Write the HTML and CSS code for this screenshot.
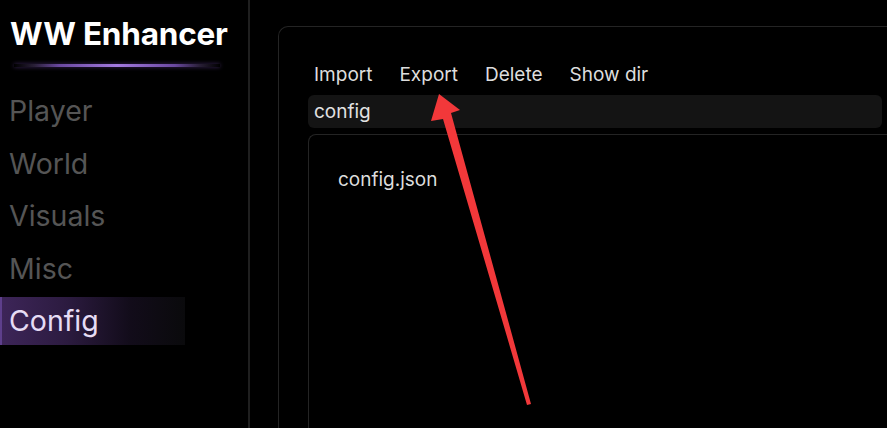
FILE: index.html
```html
<!DOCTYPE html>
<html lang="en">
<head>
    <meta charset="UTF-8">
    <meta name="viewport" content="width=device-width, initial-scale=1.0">
    <title>WW Enhancer</title>
    <link rel="stylesheet" href="styles.css">
</head>
<body>
    <aside class="sidebar">
        <h1 class="title">WW Enhancer</h1>
        <div class="glow-line"></div>
        <nav class="nav">
            <a class="nav-item">Player</a>
            <a class="nav-item">World</a>
            <a class="nav-item">Visuals</a>
            <a class="nav-item">Misc</a>
            <a class="nav-item active">Config</a>
        </nav>
    </aside>
    <main class="content">
        <section class="panel">
            <div class="actions">
                <button class="action">Import</button>
                <button class="action">Export</button>
                <button class="action">Delete</button>
                <button class="action">Show dir</button>
            </div>
            <input class="name-input" type="text" value="config">
            <div class="file-list">
                <div class="file-item">config.json</div>
            </div>
        </section>
    </main>
    <!-- pointer drawn over the toolbar -->
    <svg class="pointer" width="887" height="428" viewBox="0 0 887 428">
        <polygon points="439,94 460,110 451,113 531,404 527,405 443,119 431,121" fill="#f2383a"/>
    </svg>
</body>
</html>
```

FILE: styles.css
```css
html, body {
    margin: 0;
    height: 100%;
}
body {
    display: flex;
    background-color: #000;
    color: #ddd;
    font-family: Inter, "Noto Sans", sans-serif;
    overflow: hidden;
}
.sidebar {
    width: 248px;
    flex-shrink: 0;
    border-right: 2px solid #1f1f1f;
    padding-top: 14px;
}
.title {
    margin: 0;
    padding-left: 10px;
    font-size: 31.5px;
    line-height: 40px;
    font-weight: 700;
    color: #fff;
    letter-spacing: -0.2px;
}
.glow-line {
    margin: 10px 28px 0 14px;
    height: 3px;
    background: linear-gradient(90deg, rgba(20,20,30,0) 0%, #2a2038 10%, #6a48a0 22%, #a37ae0 50%, #6a48a0 78%, #2a2038 90%, rgba(20,20,30,0) 100%);
    box-shadow: 0 0 4px rgba(140, 90, 210, 0.45);
}
.nav {
    display: flex;
    flex-direction: column;
    gap: 4.5px;
    margin-top: 20px;
}
.nav-item {
    height: 48px;
    line-height: 48px;
    padding-left: 9px;
    font-size: 28.5px;
    color: #555;
}
.nav-item.active {
    width: 176px;
    padding-left: 7px;
    border-left: 2px solid #5e3f8c;
    color: #e6dcf5;
    background: linear-gradient(90deg, #3d2558 0%, #2c1b40 35%, #120c1a 70%, #0a0a0c 100%);
}
.content {
    flex: 1;
    display: flex;
    padding: 26px 0 0 28px;
    min-width: 0;
}
.panel {
    flex: 1;
    display: flex;
    flex-direction: column;
    border: 1px solid #242424;
    border-right: none;
    border-bottom: none;
    border-radius: 10px 0 0 0;
    padding: 35px 0 0 29px;
}
.actions {
    display: flex;
    gap: 27px;
    padding-left: 6px;
}
.action {
    background: none;
    border: none;
    padding: 0;
    font-family: inherit;
    font-size: 19px;
    line-height: 26px;
    color: #ddd;
    cursor: pointer;
}
.name-input {
    margin: 7px 5px 0 0;
    height: 33px;
    padding: 0 6px;
    border: none;
    border-radius: 6px;
    background-color: #141414;
    color: #e2e2e2;
    font-family: inherit;
    font-size: 19px;
    outline: none;
}
.file-list {
    flex: 1;
    margin-top: 6px;
    border: 1px solid #242424;
    border-right: none;
    border-bottom: none;
    border-radius: 8px 0 0 0;
    padding: 32px 0 0 29px;
}
.file-item {
    font-size: 19px;
    line-height: 26px;
    color: #ddd;
}
.pointer {
    position: absolute;
    left: 0;
    top: 0;
    pointer-events: none;
}
```
